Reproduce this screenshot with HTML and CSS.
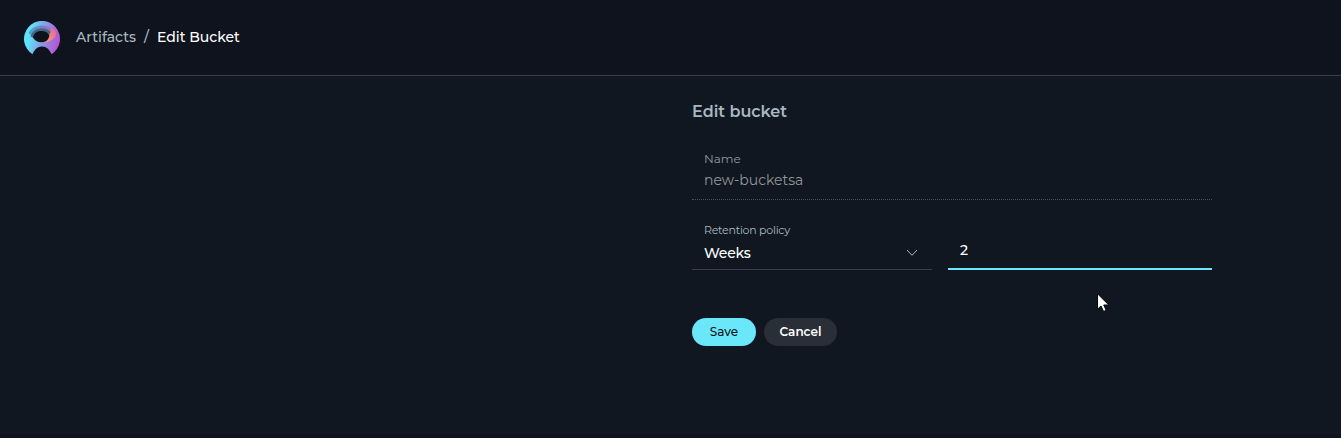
FILE: index.html
```html
<!DOCTYPE html>
<html lang="en">
<head>
<meta charset="utf-8">
<title>Edit Bucket</title>
<link rel="stylesheet" href="styles.css">
</head>
<body>
<header class="header">
  <svg class="logo" width="36" height="36" viewBox="0 0 36 36">
    <defs>
      <linearGradient id="base" x1="0" y1="0.4" x2="1" y2="0.6"><stop offset="0.15" stop-color="#5ee3fb"/><stop offset="0.55" stop-color="#8b96e8"/><stop offset="1" stop-color="#bb4fce"/></linearGradient>
      <linearGradient id="arc" x1="0" y1="0" x2="1" y2="0"><stop offset="0" stop-color="#4aa5c8"/><stop offset="0.6" stop-color="#7a7fc0"/><stop offset="1" stop-color="#b06bb0"/></linearGradient>
      <linearGradient id="warm" x1="0" y1="1" x2="1" y2="0"><stop offset="0" stop-color="#ffa077"/><stop offset="1" stop-color="#e8688f"/></linearGradient>
    </defs>
    <path fill="url(#base)" d="M8.500 33.200A18 18 0 1 1 27.500 33.200C25.500 28.500 22.500 25.500 18 25.500S10.500 28.500 8.500 33.200Z"/>
    <path fill="url(#arc)" d="M4.500 11.500C8 6.500 13 4.500 18 4.500C23 4.500 26.500 6.500 28.500 9.500L25 15H9C7 14.500 5.500 13.500 4.500 11.500Z"/>
    <path fill="#42648a" d="M6.500 15.500C8 10 12.500 7.500 18 7.500C22 7.500 25 9 27 11.500L25 16L9.500 17Z"/>
    <path fill="url(#warm)" d="M27 7C30 8 32 10 32 13C30.500 18 26 21.800 17.500 21.500L25 14Q27.500 11 27 7Z"/>
    <path fill="#0e131d" d="M9 16.500C10 12 13 10 17.500 10C21.500 10 24.300 11.800 25.300 14.500C24.800 18.500 22 21.300 17.500 21.300C13.500 21.300 10.500 19.500 9 16.500Z"/>
  </svg>
  <nav class="breadcrumbs">
    <span class="crumb">Artifacts</span><span class="divider">/</span><span class="current">Edit Bucket</span>
  </nav>
</header>
<main class="content">
  <form class="form">
    <h1 class="title">Edit bucket</h1>
    <div class="field field-name">
      <span class="label label-name">Name</span>
      <span class="value value-name">new-bucketsa</span>
    </div>
    <div class="row">
      <div class="field select">
        <div class="select-text">
          <span class="label label-policy">Retention policy</span>
          <span class="value value-select">Weeks</span>
        </div>
        <svg class="chevron" width="12" height="8" viewBox="0 0 12 8"><path d="M1 1L6 6.300L11 1" fill="none" stroke="#a9b7c1" stroke-width="1"/></svg>
      </div>
      <div class="field amount"><span class="value">2</span></div>
    </div>
    <div class="actions">
      <button class="button save" type="button"><span>Save</span></button>
      <button class="button cancel" type="button"><span>Cancel</span></button>
    </div>
  </form>
</main>
<footer class="strip"></footer>
<svg class="cursor" width="13" height="20" viewBox="0 0 13 20"><path d="M.5 .8V16.200L4 13L6.600 18.500L9.200 17.300L6.700 12H11.800Z" fill="#fff" stroke="#05070b"/></svg>
</body>
</html>
```
FILE: styles.css
```css
* { box-sizing: border-box; }
body {
  margin: 0;
  height: 438px;
  display: flex;
  flex-direction: column;
  overflow: hidden;
  background: #101720;
  color: #fff;
  font-family: Montserrat, Inter, sans-serif;
  font-size: 14px;
}
.header {
  height: 76px;
  display: flex;
  align-items: center;
  gap: 16px;
  padding: 2px 24px 0;
  background: #0e131d;
  border-bottom: 1px solid #3b3e46;
}
.breadcrumbs {
  display: flex;
  align-items: center;
  font-weight: 500;
  line-height: 20px;
  padding-bottom: 4px;
}
.crumb { width: 60px; color: #a9b7c1; }
.divider { width: 21px; padding-left: 8px; color: #a9b7c1; }
.content { flex: 1; padding: 24px 0 0 692px; }
.form { width: 520px; }
.title {
  margin: 0;
  font-size: 16px;
  font-weight: 600;
  line-height: 24px;
  color: #a9b7c1;
}
.field { display: flex; padding: 0 12px; border-bottom: 1px solid #3b3e46; }
.field-name {
  height: 52px;
  margin-top: 24px;
  flex-direction: column;
  padding-top: 3px;
  border-bottom-style: dotted;
  border-color: #4b525b;
}
.label { display: block; line-height: 16px; white-space: nowrap; }
.label-name { font-size: 12px; color: #92979c; margin-bottom: 2px; }
.value { line-height: 22px; }
.value-name { color: #92979c; }
.row { display: flex; gap: 16px; margin-top: 18px; }
.select { width: 240px; height: 52px; align-items: flex-start; justify-content: space-between; padding-top: 4px; }
.label-policy { font-size: 11px; color: #a9b7c1; letter-spacing: -.25px; margin-bottom: 4px; }
.value-select { display: block; font-weight: 500; letter-spacing: -.2px; }
.chevron { margin: 27px 2px 0 0; }
.amount { flex: 1; height: 52px; padding-top: 21px; border-bottom: 2px solid #6ae8fa; font-weight: 500; }
.actions { display: flex; gap: 8px; margin-top: 48px; }
.button {
  height: 28px;
  padding: 0;
  border: 0;
  border-radius: 14px;
  font-family: inherit;
  font-size: 12px;
  line-height: 28px;
}
.save { width: 64px; background: #6ae8fa; color: #0e131d; font-weight: 500; }
.cancel { width: 73px; background: #292e37; color: #fff; font-weight: 600; }
.strip { height: 4px; background: #0e131d; }
.cursor { position: absolute; left: 1097px; top: 293px; }
```
